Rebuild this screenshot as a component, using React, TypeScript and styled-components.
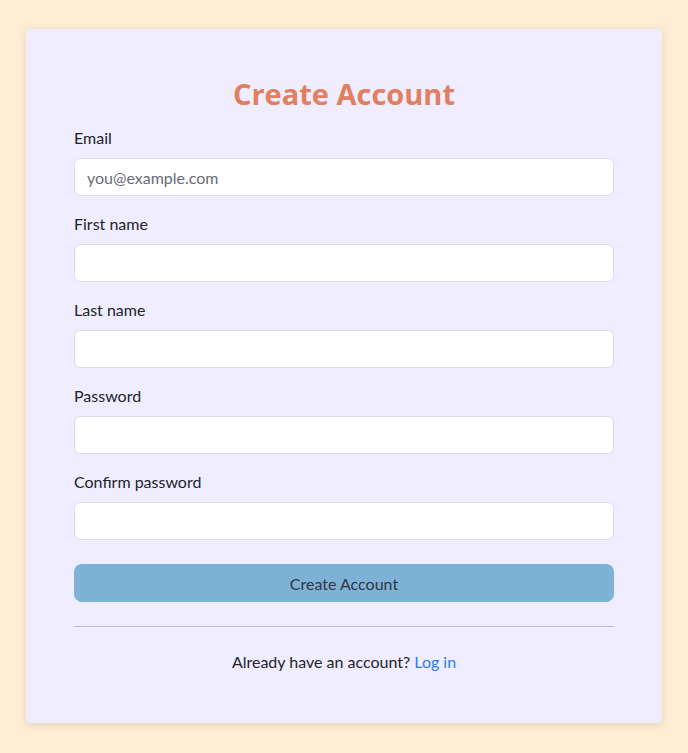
import React from "react";
import styled, { createGlobalStyle } from "styled-components";

const GlobalStyle = createGlobalStyle`
  html, body {
    margin: 0;
    padding: 0;
    background: #feeed5;
  }
  body {
    font-family: "Lato", "Noto Sans", sans-serif;
    color: #2b2b33;
  }
  * {
    box-sizing: border-box;
  }
`;

const Page = styled.div`
  min-height: 753px;
  padding: 29px 26px 30px 26px;
`;

const Card = styled.form`
  width: 636px;
  background: #efedff;
  border-radius: 3px;
  box-shadow: 0 2px 8px rgba(120, 100, 80, 0.18);
  padding: 44px 48px 49px;
  display: flex;
  flex-direction: column;
`;

const Title = styled.h1`
  margin: 0 0 11px;
  text-align: center;
  font-family: "Open Sans", "Lato", sans-serif;
  font-weight: 700;
  font-size: 29px;
  line-height: 42px;
  color: #e17f61;
`;

const Fields = styled.div`
  display: flex;
  flex-direction: column;
  gap: 16px;
`;

const Field = styled.label`
  display: flex;
  flex-direction: column;
  gap: 8px;
`;

const LabelText = styled.span`
  font-size: 16px;
  line-height: 24px;
  color: #23232b;
`;

const Input = styled.input`
  height: 38px;
  width: 100%;
  border: 1px solid #dcdbea;
  border-radius: 6px;
  background: #ffffff;
  padding: 0 12px;
  font-family: inherit;
  font-size: 16px;
  color: #23232b;
  outline: none;

  &::placeholder {
    color: #676b75;
  }
`;

const SubmitButton = styled.button`
  margin-top: 24px;
  height: 38px;
  width: 100%;
  border: none;
  border-radius: 8px;
  background: #7eb1d6;
  color: #33363d;
  font-family: inherit;
  font-size: 16px;
  cursor: pointer;
`;

const Divider = styled.hr`
  margin: 24px 0 23px;
  border: none;
  border-top: 1px solid #bdbbcc;
`;

const Footer = styled.p`
  margin: 0;
  text-align: center;
  font-size: 16px;
  line-height: 24px;
  color: #23232b;
`;

const LoginLink = styled.a`
  color: #2a7cf0;
  text-decoration: none;
`;

const fields = [
  { label: "Email", type: "email", placeholder: "you@example.com" },
  { label: "First name", type: "text" },
  { label: "Last name", type: "text" },
  { label: "Password", type: "password" },
  { label: "Confirm password", type: "password" },
];

export default function App() {
  return (
    <>
      <GlobalStyle />
      <Page>
        <Card onSubmit={(e) => e.preventDefault()}>
          <Title>Create Account</Title>
          <Fields>
            {fields.map((f) => (
              <Field key={f.label}>
                <LabelText>{f.label}</LabelText>
                <Input type={f.type} placeholder={f.placeholder} />
              </Field>
            ))}
          </Fields>
          <SubmitButton type="submit">Create Account</SubmitButton>
          <Divider />
          <Footer>
            Already have an account? <LoginLink href="#">Log in</LoginLink>
          </Footer>
        </Card>
      </Page>
    </>
  );
}
